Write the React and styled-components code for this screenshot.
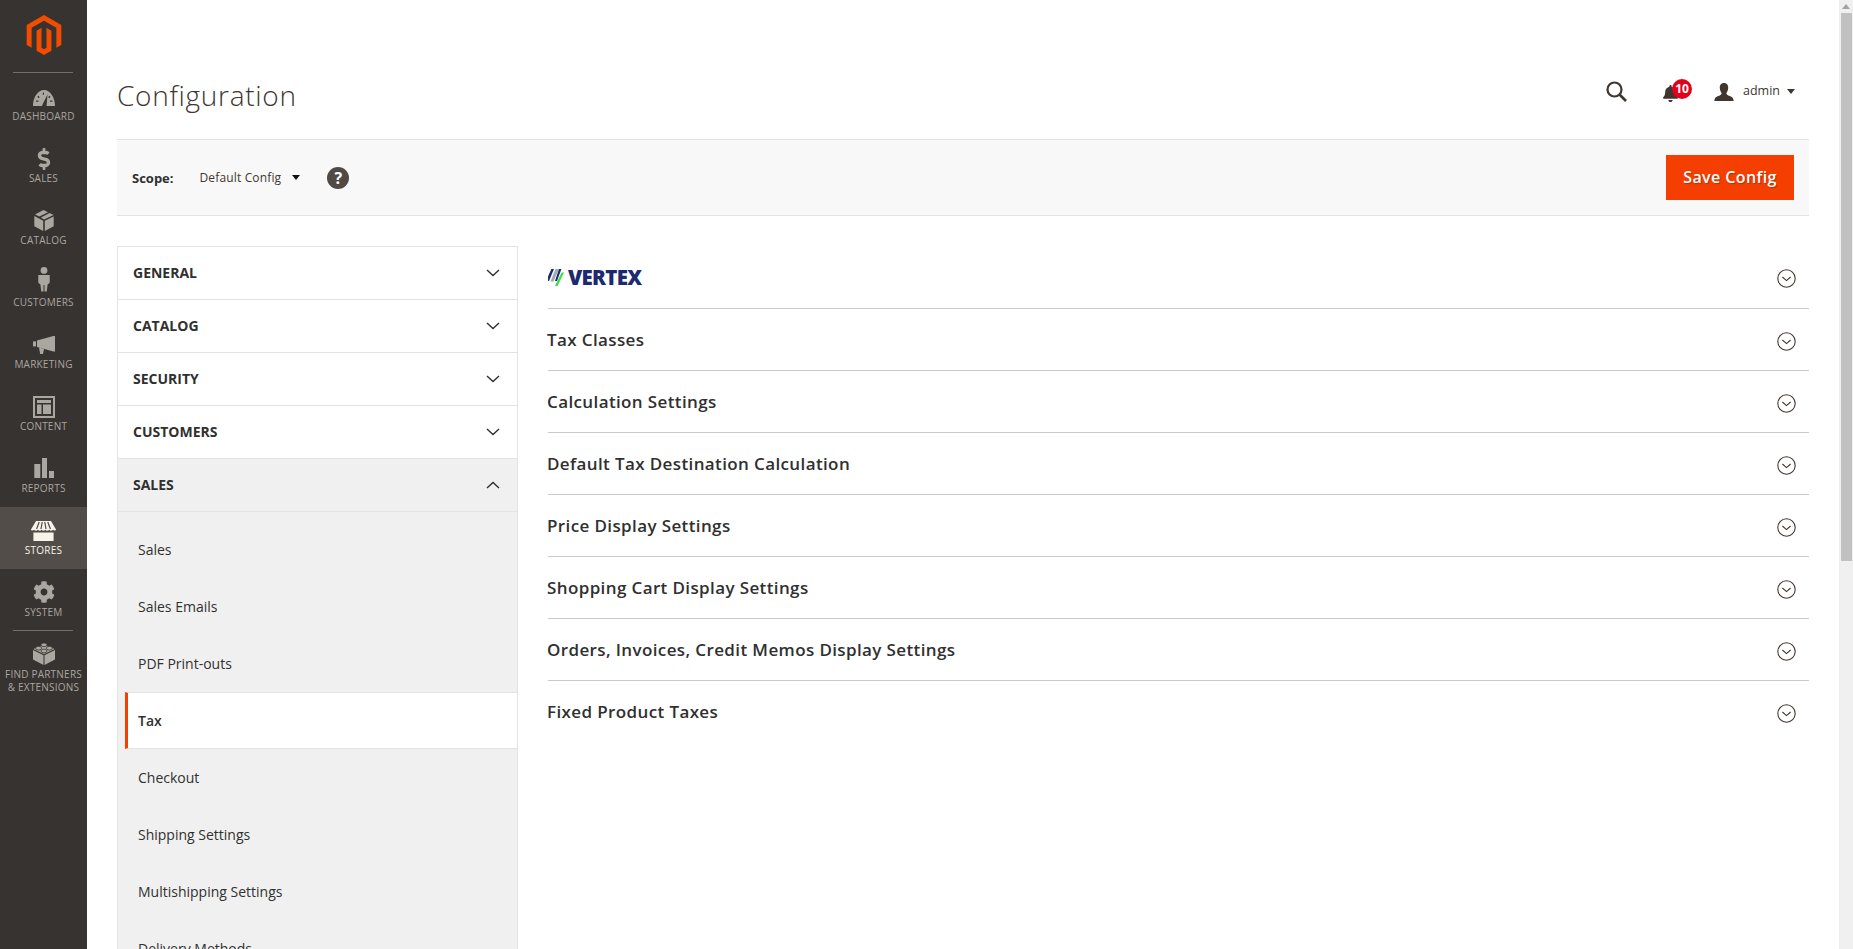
import React from 'react'
import styled, { createGlobalStyle } from 'styled-components'
import { SiMagento } from 'react-icons/si'
import { FaCog, FaBell, FaDollarSign } from 'react-icons/fa'

const GlobalStyle = createGlobalStyle`
  html, body {
    overflow: hidden;
  }
  body {
    margin: 0;
    background: #fff;
    font-family: 'Open Sans', 'Liberation Sans', sans-serif;
    color: #303030;
  }
`

const Layout = styled.div`
  display: grid;
  grid-template-columns: 87px 1fr 14px;
  height: 100vh;
  overflow: hidden;
`

const Sidebar = styled.nav`
  background: #373330;
  display: flex;
  flex-direction: column;
  align-items: stretch;
`

const LogoBox = styled.div`
  height: 73px;
  display: flex;
  justify-content: center;
  padding-top: 15px;
  box-sizing: border-box;
  color: #f24c00;
  font-size: 40px;
  svg {
    display: block;
  }
`

const Divider = styled.div`
  height: 1px;
  margin: -1px 14px 0 13px;
  background: #736e69;
`

const NavItem = styled.a`
  display: flex;
  flex-direction: column;
  align-items: center;
  height: ${(p) => (p.$tall ? '80px' : '62px')};
  box-sizing: border-box;
  padding-top: ${(p) => (p.$tall ? '10px' : '13px')};
  background: ${(p) => (p.$active ? '#524d49' : 'transparent')};
  color: ${(p) => (p.$active ? '#f7f3eb' : '#aaa6a0')};
`

const NavIcon = styled.span`
  height: 24px;
  display: flex;
  align-items: center;
  justify-content: center;
  margin-top: ${(p) => -(p.$lift || 0)}px;
  margin-bottom: ${(p) => p.$lift || 0}px;
`

const NavLabel = styled.span`
  font-size: 10px;
  line-height: 13px;
  margin-top: ${(p) => (p.$tall ? '3px' : '0')};
  text-align: center;
  text-transform: uppercase;
  white-space: pre-line;
  letter-spacing: 0.22px;
`

const Page = styled.main`
  padding: 0 30px;
  min-width: 0;
`

const PageHeader = styled.header`
  height: 139px;
  display: flex;
  justify-content: space-between;
  align-items: flex-start;
`

const Title = styled.h1`
  margin: 76px 0 0;
  font-size: 28px;
  line-height: 38px;
  font-weight: 300;
  letter-spacing: 0.7px;
  color: #41362f;
`

const HeaderActions = styled.div`
  display: flex;
  align-items: center;
  height: 21px;
  margin-top: 81px;
  padding-right: 14px;
  color: #41362f;
`

const SearchButton = styled.span`
  display: flex;
  margin-right: 35px;
`

const Bell = styled.span`
  position: relative;
  display: flex;
  font-size: 17px;
  margin: 4px 35px 0 0;
`

const Badge = styled.span`
  position: absolute;
  left: 10px;
  top: -6px;
  width: 20px;
  height: 20px;
  border-radius: 50%;
  background: #e3001b;
  color: #fff;
  font-size: 12px;
  font-weight: 700;
  line-height: 20px;
  text-align: center;
`

const UserName = styled.span`
  font-size: 12.5px;
  color: #41362f;
  margin: -3px 0 0 9px;
`

const Caret = styled.span`
  display: inline-block;
  width: 0;
  height: 0;
  margin-left: ${(p) => p.$gap || 8}px;
  border-left: 4px solid transparent;
  border-right: 4px solid transparent;
  border-top: 5px solid ${(p) => p.$color || '#41362f'};
`

const ScopeBar = styled.section`
  height: 77px;
  box-sizing: border-box;
  background: #f8f8f8;
  border-top: 1px solid #e3e3e3;
  border-bottom: 1px solid #e3e3e3;
  display: flex;
  align-items: center;
  padding: 0 15px;
`

const ScopeLabel = styled.span`
  font-size: 13px;
  font-weight: 700;
  color: #303030;
  margin-right: 26px;
`

const ScopeValue = styled.span`
  font-size: 12px;
  letter-spacing: 0.15px;
  color: #41362f;
`

const HelpIcon = styled.span`
  width: 22px;
  height: 22px;
  margin-left: 27px;
  border-radius: 50%;
  background: #514943;
  color: #fff;
  font-size: 16px;
  font-weight: 700;
  line-height: 22px;
  text-align: center;
`

const SaveButton = styled.button`
  margin-left: auto;
  width: 128px;
  height: 45px;
  padding: 0 0 2px;
  border: 0;
  background: #f43f00;
  color: #fff;
  font-family: inherit;
  font-size: 16px;
  font-weight: 600;
  letter-spacing: 0.4px;
  text-shadow: 1px 1px 1px rgba(0, 0, 0, 0.25);
`

const Columns = styled.div`
  display: grid;
  grid-template-columns: 401px 1fr;
  column-gap: 30px;
  margin-top: 30px;
`

const Tabs = styled.aside`
  display: flex;
  flex-direction: column;
`

const TabHeader = styled.div`
  height: ${(p) => (p.$first ? '54px' : '53px')};
  box-sizing: border-box;
  display: flex;
  align-items: center;
  justify-content: space-between;
  padding: 0 17px 1px 15px;
  border: 1px solid #e3e3e3;
  border-top: ${(p) => (p.$first ? '1px solid #e3e3e3' : '0')};
  background: ${(p) => (p.$open ? '#f0f0f0' : '#fff')};
  font-size: 14px;
  font-weight: 700;
  text-transform: uppercase;
  color: #303030;
`

const SubList = styled.div`
  display: flex;
  flex-direction: column;
  padding-top: 9px;
  background: #f0f0f0;
  border-left: 1px solid #e3e3e3;
  border-right: 1px solid #e3e3e3;
  & > * {
    flex: none;
  }
`

const SubItem = styled.a`
  display: flex;
  align-items: center;
  height: 57px;
  padding-left: 20px;
  font-size: 14px;
  color: #303030;
`

const ActiveSubItem = styled(SubItem)`
  margin: 0 -1px 0 7px;
  padding-left: 10px;
  box-sizing: border-box;
  background: #fff;
  font-weight: 600;
  border-left: 3px solid #f43f00;
  border-right: 1px solid #e3e3e3;
  border-top: 1px solid #e3e3e3;
  border-bottom: 1px solid #e3e3e3;
`

const Sections = styled.div`
  display: flex;
  flex-direction: column;
`

const SectionRow = styled.div`
  height: ${(p) => p.$height || 62}px;
  box-sizing: border-box;
  display: flex;
  align-items: center;
  justify-content: space-between;
  padding-right: 13px;
  padding-bottom: ${(p) => (p.$last ? '1px' : '0')};
  border-bottom: ${(p) => (p.$last ? '0' : '1px solid #cacaca')};
  svg {
    display: block;
    margin-top: 3px;
  }
`

const SectionTitle = styled.h2`
  margin: 0 0 0 -1px;
  font-size: 17px;
  font-weight: 600;
  letter-spacing: 0.38px;
  color: #303030;
`

const Vertex = styled.div`
  display: flex;
  align-items: center;
  gap: 3px;
  svg {
    margin-top: 0;
  }
`

const VertexWord = styled.span`
  font-size: 20.5px;
  font-weight: 800;
  line-height: 20px;
  color: #1c2a6e;
  letter-spacing: -0.7px;
`

const Scrollbar = styled.div`
  display: flex;
  flex-direction: column;
  background: #f0f0f0;
`

const ScrollArrow = styled.div`
  height: ${(p) => (p.$down ? '14px' : '13px')};
  flex: none;
  display: flex;
  align-items: center;
  justify-content: center;
  background: ${(p) => (p.$down ? '#d0d0d0' : 'transparent')};
  &::before {
    content: '';
    border-left: 4px solid transparent;
    border-right: 4px solid transparent;
    ${(p) =>
      p.$down ? 'border-top: 5px solid #505050;' : 'border-bottom: 5px solid #a3a3a3;'}
  }
`

const ScrollThumb = styled.div`
  height: 548px;
  margin: 0 1px 0 2px;
  background: #c1c1c1;
`

const ScrollTrack = styled.div`
  flex: 1;
`

const GaugeIcon = () => (
  <svg width="22" height="16" viewBox="0 0 22 16" fill="currentColor">
    <path d="M0 16C0 7 5 0 11 0s11 7 11 16H13.5L14.5 4.5 10 13.5 9 16Z" />
    <g fill="#373330">
      <rect x="3" y="10.5" width="2.4" height="1.2" />
      <rect x="4.8" y="6" width="1.4" height="2" transform="rotate(-40 5.5 7)" />
      <rect x="9.8" y="2.6" width="1.2" height="2" />
      <rect x="17" y="10.5" width="2.4" height="1.2" />
      <rect x="15.6" y="6" width="1.4" height="2" transform="rotate(40 16.3 7)" />
    </g>
  </svg>
)

const BoxIcon = () => (
  <svg width="20" height="21" viewBox="0 0 20 21" fill="currentColor">
    <path d="M9.5 0 14 2.2 5.4 6.6 1 4.5Z" />
    <path d="M15.6 3 19.6 5 10 9.6 6.9 7.4Z" />
    <path d="M0.3 6 9.2 10.7V21L0.3 16.2Z" />
    <path d="M19.7 6.4V16.2L10.8 21V10.7Z" />
  </svg>
)

const PersonIcon = () => (
  <svg width="12" height="25" viewBox="0 0 12 25" fill="currentColor">
    <circle cx="6" cy="3.4" r="3.4" />
    <path d="M0.3 8H11.7V15.8L9.6 17.5 8.8 24.6H6.5V18H5.5V24.6H3.2L2.4 17.5 0.3 15.8Z" />
  </svg>
)

const MegaphoneIcon = () => (
  <svg width="22" height="18" viewBox="0 0 22 18" fill="currentColor">
    <path d="M0 5.4H3V10.4H0Z" />
    <path d="M4 4.4 20.4 0 22 0V15.5H20.4L4 11Z" />
    <path d="M6 11.5 11 12.9 10 18H7.2Z" />
  </svg>
)

const ContentIcon = () => (
  <svg width="22" height="22" viewBox="0 0 22 22" fill="currentColor">
    <path fillRule="evenodd" d="M0 0H22V22H0ZM2 2V20H20V2Z" />
    <rect x="4" y="4" width="14" height="3" />
    <rect x="4" y="8.5" width="4.5" height="9.5" />
    <rect x="10" y="8.5" width="8" height="9.5" />
  </svg>
)

const BarsIcon = () => (
  <svg width="20" height="20" viewBox="0 0 20 20" fill="currentColor">
    <rect x="0.3" y="6" width="6" height="14" />
    <rect x="8" y="0" width="5" height="20" />
    <rect x="15" y="13" width="5" height="7" />
  </svg>
)

const StoreIcon = () => (
  <svg width="25" height="20" viewBox="0 0 25 20" fill="currentColor">
    <path d="M5 0H20L25 8.6C25 9.8 22.8 10 22 8.8 21 10 19 10 18.2 8.8 17.2 10 15.4 10 14.4 8.8 13.4 10 11.6 10 10.6 8.8 9.6 10 7.8 10 6.8 8.8 6 10 4 10 3 8.8 2.2 10 0 9.8 0 8.6Z" />
    <path d="M2.4 11.5H22.6V20H2.4Z" />
    <g stroke="#524d49" strokeWidth="1.2">
      <path d="M8.2 1 5.6 8" />
      <path d="M11.2 1 10 8" />
      <path d="M13.8 1 15 8" />
      <path d="M16.8 1 19.4 8" />
    </g>
  </svg>
)

const BrickIcon = () => (
  <svg width="22" height="23" viewBox="0 0 22 23" fill="currentColor">
    <path d="M0 8 10.5 13.2V23L0 17.6Z" />
    <path d="M22 8 11.5 13.2V23L22 17.6Z" />
    <path d="M11 2.4 21.6 7 11 12.2 0.4 7Z" />
    <g stroke="#373330" strokeWidth="0.8">
      <ellipse cx="11" cy="2.8" rx="3" ry="1.9" />
      <ellipse cx="5.6" cy="6.2" rx="3" ry="1.9" />
      <ellipse cx="16.4" cy="6.2" rx="3" ry="1.9" />
      <ellipse cx="11" cy="9" rx="3" ry="1.9" />
    </g>
  </svg>
)

const SearchIcon = () => (
  <svg width="21" height="21" viewBox="0 0 21 21" fill="none" stroke="currentColor">
    <circle cx="8.5" cy="8.5" r="7" strokeWidth="2.2" />
    <path d="M13.5 13.5 20 20" strokeWidth="2.6" />
  </svg>
)

const UserIcon = () => (
  <svg width="20" height="18" viewBox="0 0 20 18" fill="currentColor">
    <path d="M10 0C13 0 14.4 2.2 14.2 5 14 7.4 13.2 9 12.4 10 12.4 11.6 13.6 12.2 15.6 13 17.8 13.8 19.6 14.6 19.6 18H0.4C0.4 14.6 2.2 13.8 4.4 13 6.4 12.2 7.6 11.6 7.6 10 6.8 9 6 7.4 5.8 5 5.6 2.2 7 0 10 0Z" />
  </svg>
)

const Chevron = ({ up }) => (
  <svg width="14" height="8" viewBox="0 0 14 8" fill="none" stroke="#303030" strokeWidth="1.4">
    <path d={up ? 'M1 7 7 1.4 13 7' : 'M1 1 7 6.6 13 1'} />
  </svg>
)

const CircleChevron = () => (
  <svg width="19" height="19" viewBox="0 0 19 19" fill="none" stroke="#41362f" strokeWidth="1.1">
    <circle cx="9.5" cy="9.5" r="8.7" />
    <path d="M5.4 8 9.5 11.6 13.6 8" />
  </svg>
)

const VertexMark = () => (
  <svg width="17" height="18" viewBox="0 0 17 18">
    <path d="M2.5 13.5 7.5 1H11L5.5 13.5Z" fill="#a7a9ac" />
    <path d="M0 13V8.5L3.4 1H6L1 13Z" fill="#1c2a6e" />
    <path d="M7 13 11 1H13.4L9 13Z" fill="#1c2a6e" />
    <path d="M7 18 13.6 4.5H16L9.6 18Z" fill="#3ddc4a" />
  </svg>
)

// lift: how far an icon sits above the middle of its slot
const navItems = [
  { label: 'Dashboard', icon: <GaugeIcon /> },
  { label: 'Sales', icon: <FaDollarSign size={22} />, lift: 1 },
  { label: 'Catalog', icon: <BoxIcon />, lift: 2 },
  { label: 'Customers', icon: <PersonIcon />, lift: 5 },
  { label: 'Marketing', icon: <MegaphoneIcon />, lift: 1 },
  { label: 'Content', icon: <ContentIcon />, lift: 1 },
  { label: 'Reports', icon: <BarsIcon />, lift: 2 },
  { label: 'Stores', icon: <StoreIcon />, active: true, lift: 1 },
  { label: 'System', icon: <FaCog size={22} />, lift: 2 },
]

const closedTabs = ['General', 'Catalog', 'Security', 'Customers']
const sectionNames = [
  'Tax Classes',
  'Calculation Settings',
  'Default Tax Destination Calculation',
  'Price Display Settings',
  'Shopping Cart Display Settings',
  'Orders, Invoices, Credit Memos Display Settings',
  'Fixed Product Taxes',
]

export default function App() {
  return (
    <Layout>
      <GlobalStyle />
      <Sidebar>
        <LogoBox>
          <SiMagento />
        </LogoBox>
        <Divider />
        {navItems.map((item) => (
          <NavItem key={item.label} $active={item.active}>
            <NavIcon $lift={item.lift}>{item.icon}</NavIcon>
            <NavLabel>{item.label}</NavLabel>
          </NavItem>
        ))}
        <Divider />
        <NavItem $tall>
          <NavIcon>
            <BrickIcon />
          </NavIcon>
          <NavLabel $tall>{'Find Partners\n& Extensions'}</NavLabel>
        </NavItem>
      </Sidebar>
      <Page>
        <PageHeader>
          <Title>Configuration</Title>
          <HeaderActions>
            <SearchButton>
              <SearchIcon />
            </SearchButton>
            <Bell>
              <FaBell />
              <Badge>10</Badge>
            </Bell>
            <UserIcon />
            <UserName>admin</UserName>
            <Caret $gap={7} />
          </HeaderActions>
        </PageHeader>
        <ScopeBar>
          <ScopeLabel>Scope:</ScopeLabel>
          <ScopeValue>Default Config</ScopeValue>
          <Caret $gap={11} $color="#111" />
          <HelpIcon>?</HelpIcon>
          <SaveButton>Save Config</SaveButton>
        </ScopeBar>
        <Columns>
          <Tabs>
            {closedTabs.map((name, i) => (
              <TabHeader key={name} $first={i === 0}>
                {name}
                <Chevron />
              </TabHeader>
            ))}
            <TabHeader $open>
              Sales
              <Chevron up />
            </TabHeader>
            <SubList>
              <SubItem>Sales</SubItem>
              <SubItem>Sales Emails</SubItem>
              <SubItem>PDF Print-outs</SubItem>
              <ActiveSubItem>Tax</ActiveSubItem>
              <SubItem>Checkout</SubItem>
              <SubItem>Shipping Settings</SubItem>
              <SubItem>Multishipping Settings</SubItem>
              <SubItem>Delivery Methods</SubItem>
            </SubList>
          </Tabs>
          <Sections>
            <SectionRow $height={63}>
              <Vertex>
                <VertexMark />
                <VertexWord>VERTEX</VertexWord>
              </Vertex>
              <CircleChevron />
            </SectionRow>
            {sectionNames.map((name, i) => (
              <SectionRow key={name} $last={i === sectionNames.length - 1}>
                <SectionTitle>{name}</SectionTitle>
                <CircleChevron />
              </SectionRow>
            ))}
          </Sections>
        </Columns>
      </Page>
      <Scrollbar>
        <ScrollArrow />
        <ScrollThumb />
        <ScrollTrack />
        <ScrollArrow $down />
      </Scrollbar>
    </Layout>
  )
}
